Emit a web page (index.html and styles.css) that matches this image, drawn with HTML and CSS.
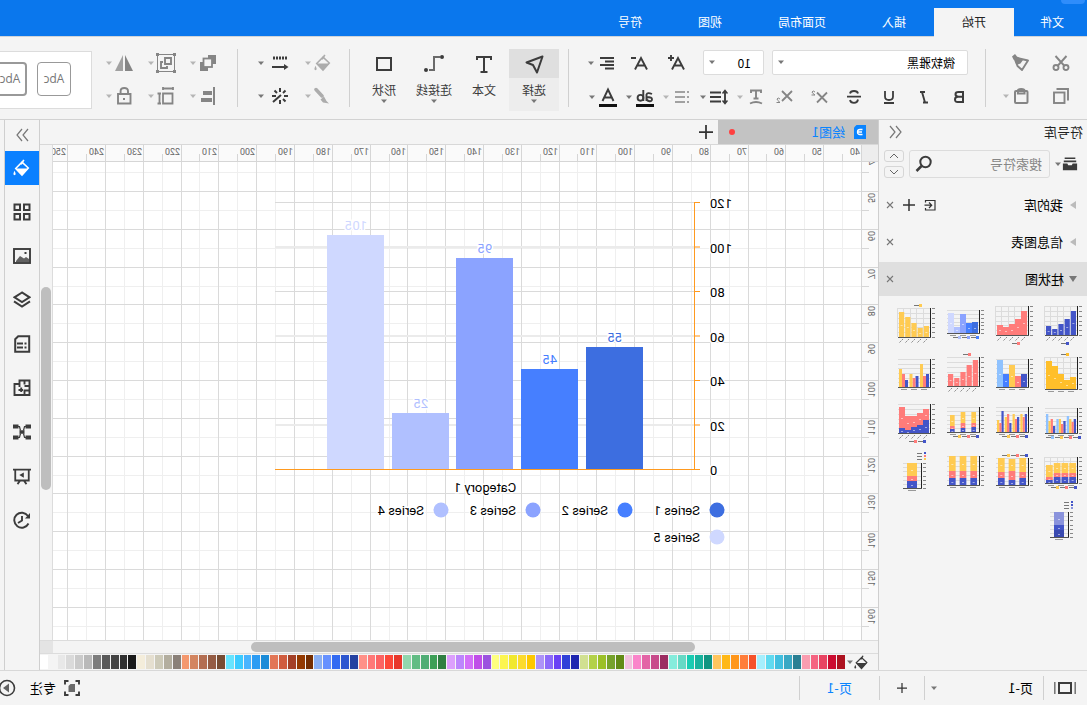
FILE: index.html
```html
<!DOCTYPE html>
<html lang="zh-CN">
<head>
<meta charset="utf-8">
<title>绘图1</title>
<link rel="stylesheet" href="styles.css">
</head>
<body>
<svg class="defs" aria-hidden="true">
  <symbol id="caret" viewBox="0 0 8 8"><path d="M1 2.500h6L4 6z" fill="currentColor"/></symbol>
  <symbol id="cut" viewBox="0 0 18 18"><g fill="none" stroke="currentColor" stroke-width="1.900"><circle cx="4" cy="13.500" r="2.500"/><circle cx="14" cy="13.500" r="2.500"/><path d="M3.500 2l9 10M14.500 2l-9 10"/></g></symbol>
  <symbol id="painter" viewBox="0 0 18 18"><path d="M2 6.500L13 4l1.500 3-2 5L8 16z" fill="none" stroke="currentColor" stroke-width="1.900" stroke-linejoin="round"/><path d="M7 6L13 2.500 15 0l3 2.500-1.500 3-1.500 1.500-1.500 4-4-1.500z" fill="currentColor"/></symbol>
  <symbol id="copy" viewBox="0 0 18 18"><g fill="none" stroke="currentColor" stroke-width="1.900"><rect x="5.500" y="5.500" width="10.500" height="10.500"/><path d="M2 13.500V2H13.500"/></g></symbol>
  <symbol id="paste" viewBox="0 0 18 18"><g fill="none" stroke="currentColor" stroke-width="2"><rect x="2.500" y="4" width="12.500" height="12" rx="1"/><path d="M5.500 6.500V3.500q0-1.500 3.300-1.500t3.300 1.500v3z"/></g></symbol>
  <symbol id="bold" viewBox="0 0 18 18"><path d="M5 4h4.500q3 0 3 2.300T9.500 8.800H5zM5 8.800h5q3 0 3 2.700t-3 2.500H5z" fill="none" stroke="currentColor" stroke-width="2"/></symbol>
  <symbol id="italic" viewBox="0 0 18 18"><path d="M8 4h5M5 14.500h5M11 4L8 14.500" fill="none" stroke="currentColor" stroke-width="1.900"/></symbol>
  <symbol id="underline" viewBox="0 0 18 18"><path d="M5 3v5.500q0 3.500 4 3.500t4-3.500V3M4 15h10" fill="none" stroke="currentColor" stroke-width="1.800"/></symbol>
  <symbol id="strike" viewBox="0 0 18 18"><path d="M13 5.500Q12.500 3 9 3T5 5.500M5 11.500Q5.500 14.800 9 14.800t4-2.800M2 8.700h14" fill="none" stroke="currentColor" stroke-width="1.800"/></symbol>
  <symbol id="super" viewBox="0 0 18 18"><path d="M1 4.500l10 10M11 4.500l-10 10" fill="none" stroke="currentColor" stroke-width="1.800"/><path d="M13 4q2-2 3 0 0 1-3 3h3.500" fill="none" stroke="currentColor"/></symbol>
  <symbol id="sub" viewBox="0 0 18 18"><path d="M1 3l10 10M11 3l-10 10" fill="none" stroke="currentColor" stroke-width="1.800"/><path d="M13 11q2-2 3 0 0 1-3 3.500h3.500" fill="none" stroke="currentColor"/></symbol>
  <symbol id="textshape" viewBox="0 0 18 18"><path d="M4 5V2.500h10V5M9 2.500v8M6.500 10.500h5M3 15.500q6-3 12 0" fill="none" stroke="currentColor" stroke-width="1.900"/></symbol>
  <symbol id="spacing" viewBox="0 0 18 18"><path d="M7 4.500h11M7 9h11M7 13.500h11M3 3v12" fill="none" stroke="currentColor" stroke-width="1.900"/><path d="M.5 5.500L3 2.500l2.500 3M.5 12.500L3 15.500l2.500-3" fill="none" stroke="currentColor" stroke-width="1.500"/></symbol>
  <symbol id="bullets" viewBox="0 0 18 18"><path d="M6 4h10M6 9h10M6 14h10M2 4h2M2 9h2M2 14h2" fill="none" stroke="currentColor" stroke-width="1.700"/></symbol>
  <symbol id="lines" viewBox="0 0 18 18"><path d="M2 4h14M2 7.500h9M2 11h14M2 14.500h9" fill="none" stroke="currentColor" stroke-width="1.900"/></symbol>
  <symbol id="bigger" viewBox="0 0 18 18"><path d="M2 15.500L8 4l6 11.500M4.500 11.500h7M12 4h6M15 1v6" fill="none" stroke="currentColor" stroke-width="1.900"/></symbol>
  <symbol id="smaller" viewBox="0 0 18 18"><path d="M2 15.500L8 4l6 11.500M4.500 11.500h7M13 4h5" fill="none" stroke="currentColor" stroke-width="1.900"/></symbol>
  <symbol id="fontcolor" viewBox="0 0 18 20"><path d="M3.500 14L9 2.500 14.500 14M5.500 10.500h7" fill="none" stroke="currentColor" stroke-width="1.900"/><rect y="17" width="18" height="3" fill="#111"/></symbol>
  <symbol id="marker" viewBox="0 0 18 20"><g fill="none" stroke="currentColor" stroke-width="1.900"><path d="M2 7q4.500-2 5.500.5V14M7.500 10q-5.500 0-5.500 2.200t2.500 2q3-.5 3-3"/><path d="M10.700 3v11"/><circle cx="13.500" cy="10.800" r="2.900"/></g><rect y="17" width="18" height="3" fill="#111"/></symbol>
  <symbol id="select" viewBox="0 0 20 20"><path d="M1.500 2.500l16 6-6.500 2.500-4 7.500z" fill="none" stroke="currentColor" stroke-width="2" stroke-linejoin="round"/></symbol>
  <symbol id="text" viewBox="0 0 20 20"><path d="M3 6V3h14v3M10 3v15M6.500 18h7" fill="none" stroke="currentColor" stroke-width="2"/></symbol>
  <symbol id="connector" viewBox="0 0 20 20"><path d="M4 3h6v13h5" fill="none" stroke="currentColor" stroke-width="2" stroke-opacity=".75"/><circle cx="2" cy="3" r="2" fill="currentColor"/><circle cx="18" cy="16" r="2" fill="currentColor"/></symbol>
  <symbol id="shape" viewBox="0 0 20 20"><rect x="3" y="4" width="14" height="12" fill="none" stroke="currentColor" stroke-width="2"/></symbol>
  <symbol id="bucket" viewBox="0 0 20 20"><path d="M3 10l7-6.500 7 7-7 7.500z" fill="none" stroke="currentColor" stroke-width="1.700"/><path d="M3 10.500h14L10 18zM18.300 13q2.500 5 0 5t0-5z" fill="currentColor"/><path d="M11 6L8 1" fill="none" stroke="currentColor" stroke-width="1.900"/></symbol>
  <symbol id="pen" viewBox="0 0 18 18"><path d="M16 2.500l-6 6.500" fill="none" stroke="currentColor" stroke-width="3.500" stroke-linecap="round"/><path d="M8 9.500l3.500 3-2.500 3-6 1 2.500-2.500z" fill="currentColor"/></symbol>
  <symbol id="linestyle" viewBox="0 0 18 18"><path d="M2 4h15" fill="none" stroke="currentColor" stroke-width="3" stroke-dasharray="2 1"/><path d="M4 13h13" stroke="currentColor" stroke-width="2"/><path d="M5 10v6l-4.500-3z" fill="currentColor"/></symbol>
  <symbol id="wand" viewBox="0 0 18 18"><path d="M8 8l8 7M9 1v4M9 13v4M1 9h4M13 9h4M3.500 3.500l2.500 2.500M14.500 3.500L12 6M3.500 14.500L6 12" fill="none" stroke="currentColor" stroke-width="2"/></symbol>
  <symbol id="order" viewBox="0 0 18 18"><path d="M1 1h8v4H5v5H1zM17 17H9v-4h4V8h4z" fill="currentColor"/><rect x="5" y="4.500" width="8.500" height="8.500" fill="none" stroke="currentColor" stroke-width="1.800"/></symbol>
  <symbol id="group" viewBox="0 0 20 20"><g fill="none" stroke="currentColor"><rect x="1.500" y="1.500" width="17" height="17"/><path d="M5 5h6v6H5zM13 9h2v6H9v-2" stroke-width="1.900"/></g><path d="M0 0h3v3H0zM17 0h3v3h-3zM0 17h3v3H0zM17 17h3v3h-3z" fill="currentColor"/></symbol>
  <symbol id="flip" viewBox="0 0 18 18"><path d="M8 1v16H0z" fill="currentColor"/><path d="M10 1v16h8z" fill="currentColor" opacity=".75"/></symbol>
  <symbol id="alignobj" viewBox="0 0 18 18"><path d="M2 0h2v18H2zM5 4h9v4H5zM5 11h11v4H5z" fill="currentColor"/></symbol>
  <symbol id="sizeobj" viewBox="0 0 18 18"><path d="M2.500 6.500h9.500v10H2.500zM2 1.500h10M2 0v3M12 0v3M15.500 6.500v10M14 6.500h3.500M14 16.500h3.500" fill="none" stroke="currentColor" stroke-width="1.800"/></symbol>
  <symbol id="lock" viewBox="0 0 18 18"><path d="M2.500 7h12.500v9.500H2.500zM5 7V4q0-3 3.700-3t3.700 3v3" fill="none" stroke="currentColor" stroke-width="1.900"/><path d="M8 11h2v2H8z" fill="currentColor"/></symbol>
  <symbol id="lib" viewBox="0 0 18 18"><path d="M3 2.500h12M2 6h14" stroke="currentColor" stroke-width="1.800"/><path d="M1 8.500h5l1 2h4l1-2h5V16H1z" fill="currentColor"/></symbol>
  <symbol id="magnify" viewBox="0 0 18 18"><g fill="none" stroke="currentColor"><circle cx="7.500" cy="7" r="5.200" stroke-width="2"/><path d="M11.500 11l5 5" stroke-width="2.500"/></g></symbol>
  <symbol id="collapse" viewBox="0 0 14 14"><path d="M7 1L2 7l5 6M13 1L8 7l5 6" fill="none" stroke="currentColor" stroke-width="1.200"/></symbol>
  <symbol id="expand" viewBox="0 0 14 14"><path d="M1 1l5 6-5 6M7 1l5 6-5 6" fill="none" stroke="currentColor" stroke-width="1.200"/></symbol>
  <symbol id="up" viewBox="0 0 10 6"><path d="M1 5l4-4 4 4" fill="none" stroke="currentColor"/></symbol>
  <symbol id="down" viewBox="0 0 10 6"><path d="M1 1l4 4 4-4" fill="none" stroke="currentColor"/></symbol>
  <symbol id="import" viewBox="0 0 12 12"><path d="M10.500 3.500V1.500H1v9.500h9.500V9M11.500 6.200H4.500M7 3.500L4.300 6.200 7 9" fill="none" stroke="currentColor" stroke-width="1.200"/></symbol>
  <symbol id="plus" viewBox="0 0 12 12"><path d="M6 0v12M0 6h12" fill="none" stroke="currentColor" stroke-width="1.500"/></symbol>
  <symbol id="close" viewBox="0 0 8 8"><path d="M1 1l6 6M7 1L1 7" fill="none" stroke="currentColor" stroke-width="1.100"/></symbol>
  <symbol id="docicon" viewBox="0 0 12 14"><path d="M0 0h9.500L12 2.500V14H0z" fill="#0a84ff"/><path d="M3.500 4.500H6Q8.500 4.500 8.500 7T6 9.500H3.500M4 7h4.500" fill="none" stroke="#fff" stroke-width="1.300"/></symbol>
  <symbol id="grid4" viewBox="0 0 18 18"><path d="M1.500 1.500h5.500v5.500H1.500zM1.500 11h5.500v5.500H1.500zM11 11h5.500v5.500H11zM11 1.500h5.500v5.500H11z" fill="none" stroke="currentColor" stroke-width="2"/></symbol>
  <symbol id="picture" viewBox="0 0 18 18"><rect x="1" y="2" width="16" height="14" fill="none" stroke="currentColor" stroke-width="1.900"/><path d="M2 15v-3l3-2 2 1.500L11 9l4 5v1z" fill="currentColor" opacity=".8"/><path d="M4.500 5h2v2h-2z" fill="currentColor"/></symbol>
  <symbol id="layers" viewBox="0 0 18 18"><path d="M9 1.500l7.500 4.800L9 11 1.500 6.300zM1 10.300l8 5.200 8-5.200" fill="none" stroke="currentColor" stroke-width="2"/></symbol>
  <symbol id="page" viewBox="0 0 18 18"><path d="M1.800 1.200h11l3 3v12.500h-14zM4.500 8.500h2M8 8.500h6M4.500 12.500h2M8 12.500h6" fill="none" stroke="currentColor" stroke-width="2"/></symbol>
  <symbol id="plan" viewBox="0 0 18 18"><path d="M1.500 1.500h10v3.500h5v11h-15zM6.500 1.500v4M1.500 7h5M11.500 5v3M8 11h4.500M9.800 8.500V13M1.500 11.500h5v4.500" fill="none" stroke="currentColor" stroke-width="1.900"/></symbol>
  <symbol id="mind" viewBox="0 0 18 18"><path d="M0 1.500h5.500v4H0zM12.500 1.500H18v4h-5.500zM0 12.500h5.500v4H0zM12.500 12.500H18v4h-5.500zM6.500 7.200h5v3.600h-5z" fill="currentColor"/><path d="M5 3.500h1.500l1 4M13 3.500h-1.500l-1 4M5 14.500h1.500l1-4M13 14.500h-1.500l-1-4" fill="none" stroke="currentColor" stroke-width="1.200"/></symbol>
  <symbol id="present" viewBox="0 0 20 20"><path d="M0 3h20M2.500 3v12h15V3M8 15l-3 4M12 15l3 4" fill="none" stroke="currentColor" stroke-width="2"/><path d="M8 6v6l5-3z" fill="currentColor"/></symbol>
  <symbol id="history" viewBox="0 0 18 18"><path d="M3 5A7.500 7.500 0 1 1 2.500 12.500M9 5v4.500l4 2.500" fill="none" stroke="currentColor" stroke-width="1.900"/><path d="M1 2v5.500h5z" fill="currentColor"/></symbol>
  <symbol id="pageview" viewBox="0 0 22 14"><path d="M.8 1v12M21.200 1v12" stroke="currentColor" stroke-width="1.500" opacity=".7"/><rect x="5" y="2" width="12" height="10" fill="none" stroke="currentColor" stroke-width="2"/></symbol>
  <symbol id="focus" viewBox="0 0 16 16"><path d="M1 4.500V1h3.500M11.500 1H15v3.500M15 11.500V15h-3.500M4.500 15H1v-3.500" fill="none" stroke="currentColor" stroke-width="1.900"/><path d="M5 4h4.500L11.500 6v6H5z" fill="currentColor" opacity=".75"/></symbol>
  <symbol id="play" viewBox="0 0 18 18"><circle cx="9" cy="9" r="7.500" fill="none" stroke="currentColor" stroke-width="1.600"/><path d="M7 4.500v9l6-4.500z" fill="currentColor" opacity=".8"/></symbol>
</svg>

<div class="app">
  <header class="titlebar">
    <span class="logo"></span>
    <nav class="tabs">
      <button class="tab tab-first">文件</button>
      <button class="tab tab-on">开始</button>
      <button class="tab">插入</button>
      <button class="tab">页面布局</button>
      <button class="tab">视图</button>
      <button class="tab">符号</button>
    </nav>
  </header>

  <div class="ribbon">
    <div class="pairs clip muted">
      <div class="cell"><svg><use href="#cut"/></svg></div>
      <div class="cell"><svg><use href="#painter"/></svg></div>
      <div class="cell"><svg><use href="#copy"/></svg></div>
      <div class="cell"><svg><use href="#paste"/></svg><svg class="caret"><use href="#caret"/></svg></div>
    </div>
    <span class="sep"></span>
    <div class="fontgroup">
      <div class="frow frow-top">
        <label class="pick pick-font"><select aria-label="字体"><option>微软雅黑</option></select><svg class="caret"><use href="#caret"/></svg></label>
        <label class="pick pick-size"><select aria-label="字号"><option>10</option></select><svg class="caret"><use href="#caret"/></svg></label>
        <div class="tool wide"><svg><use href="#bigger"/></svg></div>
        <div class="tool wide"><svg><use href="#smaller"/></svg></div>
        <div class="tool"><svg><use href="#lines"/></svg><svg class="caret"><use href="#caret"/></svg></div>
      </div>
      <div class="frow">
        <div class="tool mid"><svg><use href="#bold"/></svg></div>
        <div class="tool mid"><svg><use href="#italic"/></svg></div>
        <div class="tool mid"><svg><use href="#underline"/></svg></div>
        <div class="tool mid"><svg><use href="#strike"/></svg></div>
        <div class="tool mid muted"><svg><use href="#super"/></svg></div>
        <div class="tool mid muted"><svg><use href="#sub"/></svg></div>
        <div class="tool wide muted"><svg><use href="#textshape"/></svg><svg class="caret"><use href="#caret"/></svg></div>
        <div class="tool wide"><svg><use href="#spacing"/></svg><svg class="caret"><use href="#caret"/></svg></div>
        <div class="tool wide muted"><svg><use href="#bullets"/></svg><svg class="caret"><use href="#caret"/></svg></div>
        <div class="tool wide"><svg class="tall"><use href="#marker"/></svg><svg class="caret"><use href="#caret"/></svg></div>
        <div class="tool"><svg class="tall"><use href="#fontcolor"/></svg><svg class="caret"><use href="#caret"/></svg></div>
      </div>
    </div>
    <span class="sep"></span>
    <div class="bigtools">
      <button class="big big-on"><span class="bigicon"><svg><use href="#select"/></svg></span><span>选择</span><svg class="caret"><use href="#caret"/></svg></button>
      <button class="big"><span class="bigicon"><svg><use href="#text"/></svg></span><span>文本</span></button>
      <button class="big"><span class="bigicon"><svg><use href="#connector"/></svg></span><span>连接线</span><svg class="caret"><use href="#caret"/></svg></button>
      <button class="big"><span class="bigicon"><svg><use href="#shape"/></svg></span><span>形状</span><svg class="caret"><use href="#caret"/></svg></button>
    </div>
    <span class="sep"></span>
    <div class="pairs style">
      <div class="cell faint"><svg><use href="#bucket"/></svg><svg class="caret"><use href="#caret"/></svg></div>
      <div class="cell roomy"><svg><use href="#linestyle"/></svg><svg class="caret"><use href="#caret"/></svg></div>
      <div class="cell faint"><svg><use href="#pen"/></svg><svg class="caret"><use href="#caret"/></svg></div>
      <div class="cell roomy"><svg><use href="#wand"/></svg><svg class="caret"><use href="#caret"/></svg></div>
    </div>
    <span class="sep"></span>
    <div class="pairs arrange muted">
      <div class="cell"><svg><use href="#order"/></svg><svg class="caret"><use href="#caret"/></svg></div>
      <div class="cell"><svg class="full"><use href="#group"/></svg><svg class="caret"><use href="#caret"/></svg></div>
      <div class="cell"><svg><use href="#flip"/></svg><svg class="caret"><use href="#caret"/></svg></div>
      <div class="cell"><svg><use href="#alignobj"/></svg><svg class="caret"><use href="#caret"/></svg></div>
      <div class="cell"><svg><use href="#sizeobj"/></svg><svg class="caret"><use href="#caret"/></svg></div>
      <div class="cell"><svg><use href="#lock"/></svg><svg class="caret"><use href="#caret"/></svg></div>
    </div>
    <div class="gallery">
      <button class="style-box">Abc</button>
      <button class="style-box">Abc</button>
    </div>
  </div>

  <main class="work">
    <aside class="library">
      <div class="lib-head"><span>符号库</span><svg class="chev"><use href="#collapse"/></svg></div>
      <div class="lib-search">
        <svg class="libicon"><use href="#lib"/></svg><svg class="caret"><use href="#caret"/></svg>
        <label class="search"><input type="text" placeholder="搜索符号" aria-label="搜索符号"><svg><use href="#magnify"/></svg></label>
        <div class="steps">
          <button aria-label="上一个"><svg><use href="#up"/></svg></button>
          <button aria-label="下一个"><svg><use href="#down"/></svg></button>
        </div>
      </div>
      <div class="lib-rows">
        <div class="lib-row"><i class="tri"></i><span>我的库</span><svg class="act"><use href="#import"/></svg><svg class="act"><use href="#plus"/></svg><svg class="x"><use href="#close"/></svg></div>
        <div class="lib-row"><i class="tri"></i><span>信息图表</span><svg class="x"><use href="#close"/></svg></div>
        <div class="lib-row lib-open"><i class="tri"></i><span>柱状图</span><svg class="x"><use href="#close"/></svg></div>
      </div>
      <div class="thumbs" id="thumbs"></div>
    </aside>

    <section class="editor">
      <div class="doctabs">
        <div class="doctab"><svg><use href="#docicon"/></svg><span>绘图1</span><i class="dot"></i></div>
        <svg class="addtab"><use href="#plus"/></svg>
      </div>
      <div class="sheet">
        <div class="corner"></div>
        <svg class="ruler-x" id="rulerX"></svg>
        <div class="vfill"></div>
        <svg class="ruler-y" id="rulerY"></svg>
        <svg class="paper" id="paper"></svg>
        <div class="vscroll"><i></i></div>
      </div>
      <div class="hscroll"><i></i><b></b></div>
      <div class="palette">
        <svg class="fill"><use href="#bucket"/></svg><svg class="caret"><use href="#caret"/></svg>
        <div class="swatches" id="swatches"></div>
      </div>
    </section>

    <nav class="rail">
      <svg class="chev"><use href="#expand"/></svg>
      <button class="rail-on" aria-label="填充"><svg><use href="#bucket"/></svg></button>
      <button aria-label="符号"><svg><use href="#grid4"/></svg></button>
      <button aria-label="图片"><svg><use href="#picture"/></svg></button>
      <button aria-label="图层"><svg><use href="#layers"/></svg></button>
      <button aria-label="页面"><svg><use href="#page"/></svg></button>
      <button aria-label="平面图"><svg><use href="#plan"/></svg></button>
      <button aria-label="导图"><svg><use href="#mind"/></svg></button>
      <button aria-label="演示"><svg><use href="#present"/></svg></button>
      <button aria-label="历史"><svg><use href="#history"/></svg></button>
    </nav>
  </main>

  <footer class="status">
    <div class="st st-view"><svg><use href="#pageview"/></svg></div>
    <div class="st st-page"><span>页-1</span><svg class="caret"><use href="#caret"/></svg></div>
    <div class="st st-add"><svg><use href="#plus"/></svg></div>
    <div class="st st-tab">页-1</div>
    <div class="st-right"><svg><use href="#focus"/></svg><span>专注</span><svg class="play"><use href="#play"/></svg></div>
  </footer>
</div>
<script src="app.js"></script>
</body>
</html>
```
FILE: app.js
```js
const BLUE = '#4355c8', CORAL = '#ff7c7a', YELLOW = '#ffcb52', SKY = '#8fc2ff';

const rect = (x, y, w, h, f) => `<rect x="${x}" y="${y}" width="${w}" height="${h}" fill="${f}"/>`;
const el = id => document.getElementById(id);

/* Rulers and page grid: one major step is 10 mm */
const STEP = 37.8;
const at = (origin, halves) => Math.round(origin + halves * STEP / 2);

function drawRulerX() {
  let s = '';
  const width = el('rulerX').clientWidth;
  for (let i = 0; at(-1, i) < width; i++) {
    const x = at(-1, i), major = i % 2 === 0;
    s += rect(x, major ? 0 : 9, 1, 17, '#d6d6d6');
    if (major) s += `<text x="${x + 2}" y="10">${40 + i * 5}</text>`;
  }
  el('rulerX').innerHTML = s;
}

function drawRulerY() {
  let s = '';
  const height = el('rulerY').clientHeight;
  for (let i = -2; at(29, i) < height; i++) {
    const y = at(29, i), major = i % 2 === 0;
    s += rect(major ? 0 : 9, y, 17, 1, '#d6d6d6');
    if (major) s += `<text transform="translate(10 ${y + 2}) rotate(-90)" text-anchor="end">${50 + i * 5}</text>`;
  }
  el('rulerY').innerHTML = s;
}

function drawPaper() {
  let minor = '', major = '';
  const { clientWidth: width, clientHeight: height } = el('paper');
  for (let i = 1; at(-1, i) < width; i++) {
    const line = rect(at(-1, i), 0, 1, '100%', i % 2 ? '#efefef' : '#dadada');
    i % 2 ? minor += line : major += line;
  }
  for (let i = -1; at(29, i) < height; i++) {
    const line = rect(0, at(29, i), '100%', 1, i % 2 ? '#efefef' : '#dadada');
    i % 2 ? minor += line : major += line;
  }
  const series = [
    ['Series 1', 55, '#3d6ee0', 218, 185], ['Series 2', 45, '#467fff', 283, 207],
    ['Series 3', 95, '#8ba3ff', 348, 96], ['Series 4', 25, '#b0c0ff', 412, 251],
    ['Series 5', 105, '#cfd8ff', 477, 73]
  ];
  const levels = [[120, 40], [100, 85], [80, 129], [60, 174], [40, 218], [20, 263], [0, 307]];
  let c = '';
  levels.forEach(([v, y], k) => {
    if (v) c += k % 2 ? rect(166, y - 1, 420, 2, '#ebebeb') : rect(166, y, 420, 1, '#dadada');
    c += k % 2 ? rect(161, y - 1, 6, 2, '#ffc98a') : rect(161, y, 6, 1, '#ff9a1f');
    c += `<text x="151" y="${y + 6}" text-anchor="end">${v}</text>`;
  });
  series.forEach(([name, v, color, x, y], k) => {
    c += rect(x, y, 57, 307 - y, color);
    c += `<text x="${x + 28}" y="${y - 5}" text-anchor="middle" fill="${color}">${v}</text>`;
    const lx = 144 + (k % 4) * 92, ly = k < 4 ? 348 : 375;
    c += `<circle cx="${lx}" cy="${ly}" r="7.500" fill="${color}"/><text x="${lx + 17}" y="${ly + 5}">${name}</text>`;
  });
  c += rect(166, 41, 1, 267, '#ff9a1f') + rect(161, 307, 425, 1, '#ff9a1f');
  c += '<text x="376" y="330" text-anchor="middle">Category 1</text>';
  el('paper').innerHTML = minor + major + c;
}

/* Library previews: each column is a list of [height, colour] parts, bottom first;
   null stands for a half-width gap between groups */
const single = (color, hs) => hs.map(h => [[h, color]]);
const stack = (colors, rows) => rows.map(r => r.map((h, i) => [h, colors[i]]));
const group = (colors, rows) => rows.flatMap((r, g) =>
  (g ? [null] : []).concat(r.map((h, i) => [[h, colors[i]]])));

const charts = [
  { top: 2, base: 31, v: 1, slant: 1, low: 1, key: [BLUE], cols: single(BLUE, [24, 16, 11, 6, 9]), gap: 1 },
  { top: 2, base: 31, v: 1, slant: 1, low: 1, key: [CORAL], cols: single(CORAL, [24, 16, 11, 8, 10]) },
  { top: 6, base: 29, low: 1, key: ['#467fff', '#8ba3ff', '#b0c0ff'], cols: [[[11, '#3d6ee0']], [[10, '#467fff']], [[19, '#8ba3ff']], [[6, '#b0c0ff']], [[20, '#cfd8ff']]] },
  { top: 4, base: 33, v: 1, slant: 1, key: [YELLOW], cols: single(YELLOW, [11, 9, 14, 20, 25]), gap: 1 },
  { top: 4, base: 36, v: 1, key: ['#ffbf2a'], cols: single('#ffbf2a', [12, 9, 15, 23, 28]) },
  { top: 6, base: 34, cols: [[[13, BLUE]], [[11, CORAL]], [[22, YELLOW]], [[13, '#467fff']], [[27, SKY]]] },
  { top: 4, base: 33, slant: 1, key: [CORAL], cols: single(CORAL, [26, 21, 14, 8, 12]), gap: 1 },
  { top: 6, base: 34, cols: group([BLUE, CORAL, YELLOW], [[13, 11, 23], [11, 9, 13], [7, 13, 18]]) },
  { top: 6, base: 31, low: 1, key: [BLUE, CORAL, YELLOW, SKY], cols: group([BLUE, CORAL, YELLOW, SKY], [[14, 11, 14, 17], [12, 9, 14, 14], [7, 14, 12, 19]]) },
  { top: 5, base: 30, low: 1, key: [BLUE, CORAL, YELLOW], cols: group([BLUE, CORAL, YELLOW], [[18, 15, 18], [15, 13, 18], [9, 18, 15], [21, 9, 12]]) },
  { top: 5, base: 30, low: 1, key: [BLUE, CORAL, YELLOW], pad: 3, gap: 6, cols: stack([BLUE, CORAL, YELLOW], [[5, 4, 11], [4, 5, 11], [3, 3, 11]]) },
  { top: 2, base: 31, slant: 1, low: 1, key: [BLUE, CORAL], cols: stack([BLUE, CORAL], [[13, 11], [8, 12], [6, 11], [3, 14], [5, 21]]) },
  { top: 6, base: 32, v: 1, low: 1, key: [BLUE, CORAL, YELLOW], gap: 1, cols: stack([BLUE, CORAL, YELLOW], [[6, 4, 10], [6, 4, 10], [6, 4, 10], [3, 3, 12]]) },
  { top: 7, base: 34, key: [BLUE, CORAL, YELLOW], pad: 2, gap: 4, cols: stack([BLUE, CORAL, YELLOW], [[7, 6, 14], [5, 9, 12], [7, 6, 14]]) },
  { top: 5, base: 34, pad: 2, gap: 4, cols: stack([BLUE, CORAL, YELLOW], [[7, 7, 15], [7, 7, 15], [7, 7, 15]]) },
  { top: 12, base: 37, x0: 15, x1: 33, side: [BLUE, CORAL, YELLOW], pad: 4, cols: stack([BLUE, CORAL, YELLOW], [[7, 5, 13]]) },
  { top: 12, base: 37, x0: 15, x1: 33, side: [BLUE, BLUE, '#8a93dc'], pad: 4, cols: stack(['#3a4ab0', BLUE, '#8a93dc'], [[7, 5, 13]]) }
];

function thumb(c) {
  const x0 = c.x0 || 6, x1 = c.x1 || 38, h = c.base - c.top;
  let s = '';
  for (let i = 0; i < 7; i++) {
    const y = c.top + Math.round(i * h / 6);
    s += rect(x0, y, x1 - x0, 1, '#dcdcdc') + rect(x0 - 5, y, 3, 1, '#888');
  }
  if (c.v) for (let i = 1; i < 6; i++) s += rect(x0 + Math.round(i * (x1 - x0) / 5), c.top, 1, h, '#dcdcdc');
  const pad = c.pad || 1, gap = c.gap || 0;
  const units = c.cols.reduce((n, col) => n + (col ? 1 : 0.5), 0);
  const w = (x1 - x0 - pad * 2 - gap * (c.cols.length - 1)) / units;
  let x = x0 + pad;
  c.cols.forEach(col => {
    if (!col) { x += w / 2; return; }
    let y = c.base;
    col.forEach(([ch, f]) => {
      y -= ch;
      s += rect(x, y, w, ch, f);
      if (w > 4) s += rect(x + w / 2 - 1, y + Math.round(ch / 2), 2, 1, '#ffffff80');
    });
    x += w + gap;
  });
  s += rect(x0 - 1, c.top, 1, h + 1, '#222') + rect(x0 - 1, c.base, x1 - x0 + 1, 1, '#555');
  if (c.slant) for (let i = 0; i < 5; i++) {
    s += `<path d="M${x0 + 3 + i * 6} ${c.base + 2}l4 4" stroke="#888" stroke-dasharray="2 1"/>`;
  }
  else if (c.side) s += rect((x0 + x1) / 2 - 4, c.base + 2, 8, 1, '#999');
  else for (let i = 0; i < 3; i++) s += rect(x0 + 3 + i * 10, c.base + 2, 6, 1, '#999');
  if (c.key) {
    const y = c.low ? c.base + (c.slant ? 8 : 4) : c.top - 3, start = 18 - c.key.length * 4;
    c.key.forEach((k, i) => { s += rect(start + i * 9, y - 1, 3, 3, k) + rect(start + 3 + i * 9, y, 5, 1, '#777'); });
  }
  if (c.side) c.side.forEach((k, i) => { s += rect(x0 - 5, 1 + i * 3, 2, 2, k) + rect(x0 - 1, 2 + i * 3, 5, 1, '#777'); });
  return `<svg viewBox="0 0 40 42">${s}</svg>`;
}

const colors = `ad1220 cc0c31 e84463 f56481 fa9db0 2a7f93 3aa8c4 41bfdf 60daf0 a6effd
f5522a ff7d3a ff961a ffb817 ffc55e 119581 17b39d 19ccb2 66d9c5 85ecdc
9c2d62 c84b8b e364a6 fa85ca f2c2dd 628b15 76a22b 9bc027 b3d149 d1e091
1f26b0 2f40d8 6a41f5 8d6bfa ad93f8 fdc800 fcdb2d f1e82e fcf550 feff80
9b52df c04ee8 d36ff8 bd85fd dc9ffd 2f7f42 3d9f57 50ad75 62bc84 92d6ad
e8372b fd4739 fc6363 ff7878 ff9088 2541a1 2e57d0 326af2 6691ff 8aaff2
742d00 943900 a44027 d05c3f e27656 1a8bd8 2d9cf3 48b4ff 3bcbff 66e4ff
774c33 955c44 b36e52 d38560 f4986e 8a8078 b3ae9f cdcab9 e5dfd0 f4eddb
1a1a1a 303030 444444 595959 7d7d7d b9b9b9 cacaca dadada e8e8e8 f4f4f4 ffffff`.split(/\s+/);

drawRulerX();
drawRulerY();
drawPaper();
el('thumbs').innerHTML = charts.map(thumb).join('');
el('swatches').innerHTML = colors.map(c => `<i style="background:#${c}"></i>`).join('');
```
FILE: styles.css
```css
* { box-sizing: border-box; }
body {
  margin: 0;
  background: #f4f4f4;
  font: 12px/16px "Noto Sans CJK SC", sans-serif;
  color: #222;
}
button { margin: 0; padding: 0; border: 0; background: none; font: inherit; color: inherit; }
svg { display: block; flex: none; width: 18px; height: 18px; }
.defs { position: absolute; width: 0; height: 0; }

/* The whole interface is shown mirrored */
.app {
  display: flex;
  flex-direction: column;
  height: 100vh;
  overflow: hidden;
  transform: scaleX(-1);
  background: #f4f4f4;
}
.caret { width: 8px; height: 8px; color: #777; }
.muted { color: #858585; }
.muted .caret, .faint .caret { color: #b5b5b5; }
.faint { color: #acacac; }

/* Title bar */
.titlebar { position: relative; flex: none; height: 37px; background: #0a77ed; border-bottom: 1px solid #cfd4da; }
.logo { position: absolute; left: 2px; top: 0; width: 24px; height: 4px; border-radius: 0 0 8px 8px; background: #2f8dfb; }
.tabs { display: flex; align-items: flex-end; height: 37px; }
.tab { height: 29px; padding: 0 28px 2px; color: #fff; white-space: nowrap; }
.tab-first { padding: 0 26px 2px 23px; }
.tab-on { background: #f4f4f4; color: #222; }

/* Ribbon */
.ribbon { display: flex; flex: none; height: 83px; padding-top: 12px; border-bottom: 1px solid #d2d2d2; color: #3c3c3c; overflow: hidden; }
.sep { flex: none; width: 1px; height: 58px; background: #d0d0d0; }
.pairs { display: grid; flex: none; grid-template-rows: 27px 40px; align-items: center; height: 67px; }
.cell { display: flex; align-items: center; gap: 2px; }
.roomy { gap: 6px; }
.cell .full { width: 20px; height: 20px; margin: 0 -1px; }
.clip { grid-template-columns: 40px 44px; padding-left: 17px; }
.style { grid-template-columns: 43px 51px; padding-left: 17px; }
.arrange { grid-template-columns: 42px 42px 27px; padding-left: 20px; }

.fontgroup { flex: none; width: 416px; padding: 1px 0 0 8px; }
.frow { display: flex; align-items: center; height: 44px; }
.frow-top { height: 25px; padding-left: 9px; }
.tool { display: flex; align-items: center; justify-content: flex-start; gap: 3px; padding-left: 2px; flex: none; width: 34px; }
.tool .tall { height: 20px; }
.wide { width: 37px; }
.mid { width: 35px; padding-left: 9px; }
.frow-top .tool:last-child { margin-left: -4px; }
.pick { display: flex; position: relative; flex: none; height: 25px; margin-right: 8px; }
.pick select { appearance: none; width: 100%; height: 25px; padding: 0 12px; border: 1px solid #dcdcdc; border-radius: 2px; background: #fff; font: inherit; color: #000; }
.pick .caret { position: absolute; right: 5px; top: 8px; }
.pick-font { width: 196px; }
.pick-size { width: 61px; margin-right: 15px; }

.bigtools { display: flex; flex: none; padding: 0 9px; }
.big { display: flex; flex-direction: column; align-items: center; width: 50px; height: 62px; white-space: nowrap; }
.big span:not(.bigicon) { margin-top: 4px; line-height: 16px; }
.big .caret { margin-top: -1px; }
.bigicon { display: flex; align-items: center; justify-content: center; width: 50px; height: 29px; }
.bigicon svg { width: 20px; height: 20px; }
.big-on { background: #ededed; }
.big-on .bigicon { background: #dfdfdf; }

.gallery { display: flex; flex: 1 0 auto; gap: 10px; height: 58px; margin: 2px 0 0 14px; padding: 10px 0 0 20px; border: 1px solid #dcdcdc; border-right: 0; background: #fff; }
.style-box { flex: none; width: 34px; height: 34px; border: 1px solid #999; border-radius: 4px; color: #777; font-family: "Open Sans", sans-serif; }
.style-box + .style-box { border: 2px solid #999; }

/* Work area */
.work { display: flex; flex: 1; min-height: 0; }
.library { display: flex; flex-direction: column; flex: none; width: 209px; border-right: 1px solid #cfcfcf; font-size: 13px; }
.chev { width: 14px; height: 14px; color: #777; }
.lib-head { display: flex; align-items: center; justify-content: space-between; height: 24px; padding: 0 10px 0 4px; }
.lib-search { display: flex; align-items: center; height: 40px; padding-left: 9px; color: #3c3c3c; }
.libicon { width: 16px; height: 18px; }
.search { display: flex; align-items: center; width: 141px; height: 28px; margin: 0 5px 0 4px; padding: 0 5px 0 7px; border: 1px solid #dcdcdc; border-radius: 3px; }
.search input { flex: 1; min-width: 0; padding: 0; border: 0; background: none; font: inherit; outline: 0; }
.search input::placeholder { color: #868686; }
.steps { display: flex; flex-direction: column; gap: 4px; }
.steps button { display: flex; align-items: center; justify-content: center; width: 20px; height: 12px; border: 1px solid #d6d6d6; border-radius: 3px; color: #666; }
.steps svg { width: 10px; height: 6px; }
.lib-rows { padding-top: 2px; }
.lib-row { display: flex; align-items: center; height: 37px; padding: 0 7px 0 11px; color: #000; }
.lib-row span { flex: 1; }
.tri { width: 0; height: 0; margin-right: 7px; border: solid transparent; border-width: 4px 0 4px 6px; border-left-color: #bbb; }
.lib-open { height: 34px; margin-top: 2px; padding-left: 10px; background: #dfdfdf; }
.lib-open .tri { margin-right: 5px; border-width: 6px 4px 0; border-top-color: #777; border-left-color: transparent; }
.act { width: 12px; height: 12px; margin-right: 9px; color: #333; }
.x { width: 8px; height: 8px; color: #777; }
.thumbs { display: grid; grid-template-columns: repeat(4, 40px); gap: 7px 9px; padding: 8px 0 0 4px; }
.thumbs svg { width: 40px; height: 42px; }

.editor { display: flex; flex-direction: column; flex: 1; min-width: 0; }
.doctabs { display: flex; align-items: center; flex: none; height: 25px; border-bottom: 1px solid #d8d8d8; }
.doctab { display: flex; align-items: center; width: 160px; height: 24px; padding: 0 11px 0 12px; background: #c3c3c3; color: #0a84ff; font-size: 13px; }
.doctab svg { width: 12px; height: 14px; margin-right: 9px; }
.doctab span { flex: 1; }
.dot { width: 6px; height: 6px; border-radius: 50%; background: #ff4040; }
.addtab { width: 14px; height: 14px; margin-left: 5px; color: #333; }

.sheet { display: grid; flex: 1; min-height: 0; grid-template: 17px 1fr / 17px 1fr 13px; }
.corner { background: #ededed; border: solid #d6d6d6; border-width: 0 1px 1px 0; }
.ruler-x { width: 100%; height: 17px; background: #fafafa; border-bottom: 1px solid #d6d6d6; overflow: hidden; }
.ruler-y { width: 17px; height: 100%; background: #fafafa; border-right: 1px solid #d6d6d6; overflow: hidden; }
.ruler-x text, .ruler-y text { font: 9px Roboto, sans-serif; fill: #666; }
.paper { width: 100%; height: 100%; background: #fff; overflow: hidden; }
.paper text { font: 13px Roboto, sans-serif; paint-order: stroke; stroke: #fff; stroke-width: 3px; }
.vscroll, .vfill { border-left: 1px solid #dcdcdc; }
.vscroll i { display: block; width: 10px; height: 203px; margin: 125px 0 0 1px; border-radius: 5px; background: #bebebe; }
.hscroll { display: flex; flex: none; justify-content: space-between; height: 14px; border: solid #dcdcdc; border-width: 1px 0; }
.hscroll i { width: 53%; height: 10px; margin: 1px 0 0 183px; border-radius: 5px; background: #bebebe; }
.hscroll b { width: 13px; background: #e4e4e4; }
.palette { display: flex; align-items: center; flex: none; height: 16px; padding-left: 9px; color: #3c3c3c; }
.fill { width: 15px; height: 15px; }
.palette .caret { margin-right: 1px; }
.swatches { display: flex; flex: 1; gap: 1px; height: 14px; }
.swatches i { flex: 1; }

.rail { display: flex; flex-direction: column; align-items: center; flex: none; width: 36px; margin-right: 4px; border: solid #cfcfcf; border-width: 0 1px; color: #3c3c3c; gap: 10px; }
.rail .chev { margin: 8px 0 -1px; }
.rail button { display: flex; align-items: center; justify-content: center; width: 34px; height: 34px; }
.rail .rail-on { background: #0a80ff; color: #fff; }

/* Status bar */
.status { display: flex; flex: none; align-items: center; height: 35px; border-top: 1px solid #d8d8d8; color: #000; font-size: 13px; }
.st { display: flex; align-items: center; justify-content: center; height: 24px; border-right: 1px solid #d0d0d0; }
.st-view { width: 44px; color: #3c3c3c; }
.st-view svg { width: 22px; height: 14px; }
.st-page { justify-content: space-between; width: 119px; padding: 0 5px 0 10px; }
.st-add { width: 45px; color: #333; }
.st-add svg { width: 10px; height: 10px; }
.st-tab { width: 80px; color: #0a84ff; }
.st-right { display: flex; align-items: center; margin-left: auto; gap: 8px; }
.st-right svg { width: 16px; height: 16px; color: #3c3c3c; }
.st-right .play { width: 18px; height: 18px; margin: 0 -2px 0 6px; }
```
